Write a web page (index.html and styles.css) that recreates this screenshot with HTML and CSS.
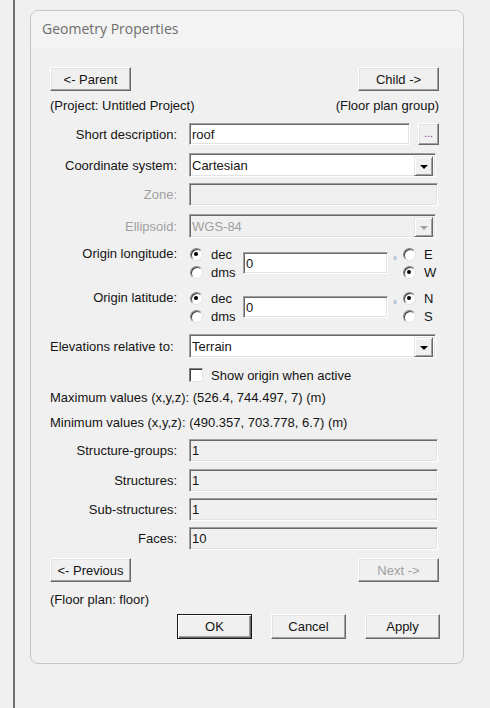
FILE: index.html
```html
<!DOCTYPE html>
<html>
<head>
<meta charset="utf-8">
<link rel="stylesheet" href="styles.css">
</head>
<body>
<div class="page">
  <div class="rail"></div>
  <div class="panel">
    <div class="panel-head">Geometry Properties</div>
    <div class="panel-body">
      <div class="nav-row r-parent">
        <div class="btn w81">&lt;- Parent</div>
        <div class="btn w81">Child -&gt;</div>
      </div>
      <div class="info-row r-project">
        <span>(Project: Untitled Project)</span>
        <span>(Floor plan group)</span>
      </div>

      <div class="row r-short">
        <div class="lbl">Short description:</div>
        <div class="field w222"><span class="val">roof</span></div>
        <div class="btn dots">...</div>
      </div>

      <div class="row r-coord">
        <div class="lbl">Coordinate system:</div>
        <div class="select w247">
          <span class="val">Cartesian</span>
          <div class="drop"><span class="tri"></span></div>
        </div>
      </div>

      <div class="row r-zone">
        <div class="lbl disabled">Zone:</div>
        <div class="field disabled-field w249"></div>
      </div>

      <div class="row r-ell">
        <div class="lbl disabled">Ellipsoid:</div>
        <div class="select disabled-field w247">
          <span class="val disabled">WGS-84</span>
          <div class="drop"><span class="tri gray"></span></div>
        </div>
      </div>

      <div class="coord-row r-lon">
        <div class="lbl tall">Origin longitude:</div>
        <div class="radios">
          <div class="opt"><span class="radio on"></span>dec</div>
          <div class="opt"><span class="radio"></span>dms</div>
        </div>
        <div class="field coord"><span class="val">0</span></div>
        <div class="deg">°</div>
        <div class="radios dir">
          <div class="opt"><span class="radio"></span>E</div>
          <div class="opt"><span class="radio on"></span>W</div>
        </div>
      </div>

      <div class="coord-row r-lat">
        <div class="lbl tall">Origin latitude:</div>
        <div class="radios">
          <div class="opt"><span class="radio on"></span>dec</div>
          <div class="opt"><span class="radio"></span>dms</div>
        </div>
        <div class="field coord"><span class="val">0</span></div>
        <div class="deg">°</div>
        <div class="radios dir">
          <div class="opt"><span class="radio on"></span>N</div>
          <div class="opt"><span class="radio"></span>S</div>
        </div>
      </div>

      <div class="row r-elev">
        <div class="lbl left">Elevations relative to:</div>
        <div class="select w247">
          <span class="val">Terrain</span>
          <div class="drop"><span class="tri"></span></div>
        </div>
      </div>

      <div class="row r-check">
        <div class="lbl"></div>
        <span class="check"></span>
        <span class="check-text">Show origin when active</span>
      </div>

      <div class="text-line r-max">Maximum values (x,y,z): (526.4, 744.497, 7) (m)</div>
      <div class="text-line r-min">Minimum values (x,y,z): (490.357, 703.778, 6.7) (m)</div>

      <div class="row r-sg">
        <div class="lbl">Structure-groups:</div>
        <div class="field disabled-field w249"><span class="val">1</span></div>
      </div>
      <div class="row r-st">
        <div class="lbl">Structures:</div>
        <div class="field disabled-field w249"><span class="val">1</span></div>
      </div>
      <div class="row r-sub">
        <div class="lbl">Sub-structures:</div>
        <div class="field disabled-field w249"><span class="val">1</span></div>
      </div>
      <div class="row r-faces">
        <div class="lbl">Faces:</div>
        <div class="field disabled-field w249"><span class="val">10</span></div>
      </div>

      <div class="nav-row r-prev">
        <div class="btn w81">&lt;- Previous</div>
        <div class="btn w81 disabled">Next -&gt;</div>
      </div>
      <div class="info-row r-floor">
        <span>(Floor plan: floor)</span>
      </div>

      <div class="actions">
        <div class="btn default w75">OK</div>
        <div class="btn w75">Cancel</div>
        <div class="btn w75">Apply</div>
      </div>
    </div>
  </div>
</div>
</body>
</html>
```

FILE: styles.css
```css
* { box-sizing: border-box; }
html, body {
  margin: 0;
  padding: 0;
  background: #f0f0f0;
}
body {
  font-family: "Liberation Sans", Arial, sans-serif;
  font-size: 13px;
  color: #141414;
  width: 490px;
  height: 708px;
  overflow: hidden;
}
.page {
  display: flex;
  height: 708px;
  padding-left: 13px;
}
.rail {
  width: 2px;
  height: 708px;
  background: #6f6f6f;
}
.panel {
  margin-left: 15px;
  margin-top: 10px;
  width: 434px;
  height: 654px;
  border: 1px solid #c6c6c6;
  border-radius: 8px;
  background: #f0f0f0;
  overflow: hidden;
}
.panel-head {
  height: 37px;
  background: #f3f3f3;
  font-family: "Open Sans", "Noto Sans", sans-serif;
  font-size: 14px;
  color: #6d6d6d;
  padding-left: 11px;
  line-height: 36px;
}
.panel-body {
  padding: 0 24px 0 19px;
  display: flex;
  flex-direction: column;
}

/* buttons */
.btn {
  height: 24px;
  background: #f0f0f0;
  border: 1px solid;
  border-color: #fff #696969 #696969 #fff;
  box-shadow: inset -1px -1px 0 #a0a0a0, inset 1px 1px 0 #e3e3e3;
  display: flex;
  align-items: center;
  justify-content: center;
  line-height: 1;
  color: #141414;
}
.btn.disabled { color: #a0a0a0; }
.w81 { width: 81px; }
.w75 { width: 75px; height: 25px; }
.btn.default {
  border: 1px solid #1a1a1a;
  box-shadow: inset 1px 1px 0 #fff, inset -1px -1px 0 #696969, inset -2px -2px 0 #a0a0a0;
}
.nav-row {
  display: flex;
  justify-content: space-between;
}
.info-row {
  display: flex;
  justify-content: space-between;
  height: 16px;
  line-height: 16px;
}
.r-parent { margin-top: 19px; }
.r-project { margin-top: 7px; }

/* rows */
.row {
  display: flex;
  align-items: center;
}
.lbl {
  width: 127px;
  margin-right: 12px;
  text-align: right;
  white-space: nowrap;
  flex: none;
}
.lbl.left { text-align: left; }
.lbl.tall { height: 18px; line-height: 18px; }
.disabled { color: #a0a0a0; }

.field, .select {
  height: 22px;
  background: #fff;
  border: 1px solid;
  border-color: #a0a0a0 #fff #fff #a0a0a0;
  box-shadow: inset 1px 1px 0 #696969, inset -1px -1px 0 #e3e3e3;
  display: flex;
  align-items: center;
  padding-left: 2px;
  position: relative;
}
.disabled-field { background: #f0f0f0; }
.val { line-height: 1; }
.w222 { width: 222px; }
.w247 { width: 247px; height: 24px; }
.w249 { width: 249px; height: 23px; }

.dots {
  width: 21px;
  height: 22px;
  margin-left: 8px;
  align-items: flex-end;
  padding-bottom: 5px;
  font-size: 11px;
  color: #7a2f9a;
  letter-spacing: 0;
}

.drop {
  position: absolute;
  right: 2px;
  top: 2px;
  width: 19px;
  height: 20px;
  background: #f0f0f0;
  border: 1px solid;
  border-color: #e3e3e3 #696969 #696969 #e3e3e3;
  box-shadow: inset 1px 1px 0 #fff, inset -1px -1px 0 #a0a0a0;
  display: flex;
  align-items: center;
  justify-content: center;
}
.tri {
  width: 0;
  height: 0;
  border-left: 4px solid transparent;
  border-right: 4px solid transparent;
  border-top: 4px solid #000;
  margin-top: 1px;
}
.tri.gray { border-top-color: #a0a0a0; }

.r-short { margin-top: 9px; }
.r-coord { margin-top: 8px; }
.r-zone { margin-top: 6px; }
.r-ell { margin-top: 8px; }

/* coordinate rows */
.coord-row {
  display: flex;
  align-items: flex-start;
}
.r-lon { margin-top: 7px; }
.r-lat { margin-top: 8px; }
.radios {
  display: flex;
  flex-direction: column;
  width: 54px;
  flex: none;
}
.opt {
  height: 18px;
  display: flex;
  align-items: center;
  line-height: 1;
}
.radio {
  width: 13px;
  height: 13px;
  border-radius: 50%;
  background: #fff;
  border: 1px solid;
  border-color: #808080 #e3e3e3 #e3e3e3 #808080;
  box-shadow: inset 1px 1px 0 #404040;
  margin-left: 1px;
  margin-right: 8px;
  position: relative;
  flex: none;
}
.radio.on::after {
  content: "";
  position: absolute;
  left: 3px;
  top: 3px;
  width: 4px;
  height: 4px;
  border-radius: 50%;
  background: #000;
}
.coord {
  width: 145px;
  margin-top: 7px;
  align-items: flex-end;
  padding-bottom: 3px;
}
.deg {
  width: 14px;
  text-align: center;
  font-size: 10px;
  color: #7b8fb0;
  margin-top: 11px;
  line-height: 10px;
}
.radios.dir { width: 30px; }
.radios.dir .radio { margin-right: 8px; }

.r-elev { margin-top: 9px; }
.r-check { margin-top: 10px; height: 14px; }
.check {
  width: 14px;
  height: 14px;
  background: #fff;
  border: 1px solid;
  border-color: #808080 #e3e3e3 #e3e3e3 #808080;
  box-shadow: inset 1px 1px 0 #404040;
  margin-right: 8px;
  flex: none;
}
.check-text { line-height: 1; }

.text-line {
  height: 16px;
  line-height: 16px;
  white-space: nowrap;
}
.r-max { margin-top: 8px; }
.r-min { margin-top: 9px; }

.r-sg { margin-top: 8px; }
.r-st { margin-top: 7px; }
.r-sub { margin-top: 6px; }
.r-faces { margin-top: 6px; }

.r-prev { margin-top: 8px; }
.r-floor { margin-top: 10px; }

.actions {
  display: flex;
  justify-content: flex-end;
  gap: 19px;
  margin-top: 6px;
  margin-right: -1px;
}
```
